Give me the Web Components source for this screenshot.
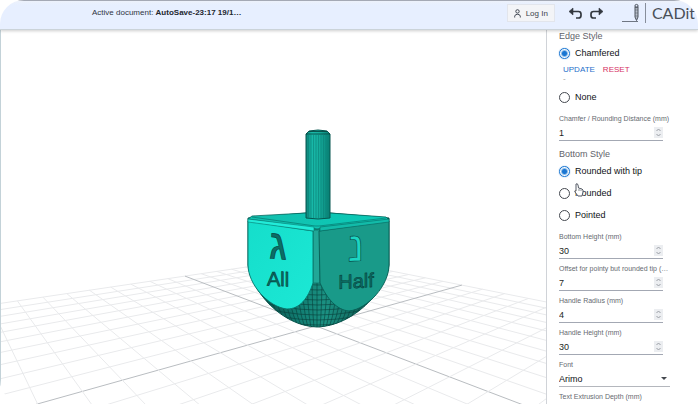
<!DOCTYPE html>
<html lang="en">
<head>
<meta charset="utf-8">
<title>CADit</title>
<style>
  body { margin: 0; background: #fff; font-family: "Liberation Sans", Arial, sans-serif; color: #24272c; }
</style>
</head>
<body>
<cad-app></cad-app>
<script>
const define = (name, html, setup) => {
  const tpl = document.createElement('template');
  tpl.innerHTML = html;
  customElements.define(name, class extends HTMLElement {
    constructor() {
      super();
      this.attachShadow({ mode: 'open' }).append(tpl.content.cloneNode(true));
    }
    connectedCallback() { if (setup) setup(this, this.shadowRoot); }
  });
};

define('cad-header', `
<style>
  :host { display: flex; align-items: center; box-sizing: border-box; height: 30px; padding: 0 3px 4px 92px;
    background: linear-gradient(#edf1fb, #e7efff 4px); border-top: 1px solid #a4a9b5; border-bottom: 1px solid #cbd3d9;
    box-shadow: 0 1px 3px #0003; position: relative; z-index: 1; }
  .doc { font-size: 8px; line-height: 12px; color: #2f343f; white-space: nowrap; flex: 1; }
  b { color: #23272f; }
  button { font: inherit; color: #3d434d; border: 0; background: none; padding: 0; display: flex; align-items: center; }
  .login { height: 18px; box-sizing: border-box; padding: 0 6px; gap: 5px; font-size: 8px; background: #f3f4f7; border: 1px solid #e2e5ec; margin-right: 13px; }
  .tool { margin-right: 6px; }
  .logo { display: flex; align-items: center; margin-left: 12px; gap: 6px; color: #4a4f58; text-decoration: none; font: 16px/20px Lato, sans-serif; }
</style>
<div class="doc">Active document: <b>AutoSave-23:17 19/1…</b></div>
<button class="login"><svg width="7" height="9" viewBox="0 0 7 9" fill="none" stroke="#414753"><circle cx="3.5" cy="2.4" r="1.7"/><path d="M.7 8.5V7.2Q1 5.3 3.5 5.3T6.3 7.2V8.5"/></svg>Log In</button>
<button class="tool" aria-label="Undo"><svg width="15" height="13" viewBox="0 0 15 13" fill="none" stroke="#33383f" stroke-width="1.7"><path d="M3 4.5H10.500Q13 4.500 13 7V8.500Q13 11 10.500 11H8"/><path d="M5 1 1 4.500 5 8Z" fill="#33383f" stroke-width=".6"/></svg></button>
<button class="tool" aria-label="Redo"><svg width="15" height="13" viewBox="0 0 15 13" fill="none" stroke="#33383f" stroke-width="1.7"><path d="M12 4.500H4.500Q2 4.500 2 7V8.500Q2 11 4.500 11H7"/><path d="M10 1 14 4.500 10 8Z" fill="#33383f" stroke-width=".6"/></svg></button>
<a class="logo" href="#"><svg width="24" height="20" viewBox="0 0 24 20" fill="none" stroke="#6f7683"><path d="M0 18.5H16"/><path d="M23.5 0V20" stroke="#878e9b"/><path d="M13 4V14L14.5 17.5 16 14V4Z" stroke="#4e545e" fill="#b9bfca"/><circle cx="14.5" cy="3" r="1.6" stroke="#4e545e"/><path d="M13 7H16M13 10H16M13 13H16" stroke="#4e545e" stroke-width=".5"/></svg>CADit</a>
`);

define('cad-scene', `
<style>
  :host { display: block; min-width: 0; min-height: 0; overflow: hidden; background: #fff; border-left: 1px solid #c3d2d8; }
  svg { display: block; width: 100%; height: 100%; }
</style>
<svg viewBox="1 30 545 374" preserveAspectRatio="xMidYMid slice" role="img" aria-label="Dreidel model">
  <defs>
    <linearGradient id="stem"><stop offset="0" stop-color="#0c8176"/><stop offset=".25" stop-color="#18b9a9"/><stop offset=".55" stop-color="#16ad9d"/><stop offset="1" stop-color="#087f73"/></linearGradient>
    <linearGradient id="top"><stop offset="0" stop-color="#13bfae"/><stop offset="1" stop-color="#0bcab7"/></linearGradient>
    <linearGradient id="left" x2="1" y2="1"><stop offset="0" stop-color="#15decb"/><stop offset="1" stop-color="#1ce8d5"/></linearGradient>
    <linearGradient id="bowl"><stop offset="0" stop-color="#0b3d3a"/><stop offset=".35" stop-color="#117c71"/><stop offset=".55" stop-color="#1b9182"/><stop offset="1" stop-color="#08413b"/></linearGradient>
    <clipPath id="bowlclip"><path d="M248 262C251 290 280 326 317 327 354 326 386 292 389 262L320 250H313Z"/></clipPath>
  </defs>
  <g id="grid" fill="none" stroke="#e9eaec"></g>
  <path d="M248 218V265C251 290 281 326 317 327 354 326 386 290 389 265V218L330 213H306Z" fill="url(#bowl)" stroke="#07564e"/>
  <g id="mesh" clip-path="url(#bowlclip)" fill="none" stroke="#083f3a" stroke-width=".6"></g>
  <path d="M313 230H320V283H313Z" fill="#21a797" stroke="#0b6e64" stroke-width=".7"/>
  <path d="M248 221 313 231V283C308 298 300 309 287 309 268 307 248 284 248 265Z" fill="url(#left)" stroke="#07766c" stroke-width=".9"/>
  <path d="M389 221 319 231 320 283C327 299 337 310 349 311 368 309 389 285 389 265Z" fill="#199a89" stroke="#075e55" stroke-width=".9"/>
  <path d="M248 219 252 216 306 213H330L386 217 389 220 317 229Z" fill="url(#top)" stroke="#08685f" stroke-width=".8"/>
  <path d="M248 219 314 227V231L248 222Z" fill="#22ecd9" stroke="#087d73" stroke-width=".6"/>
  <path d="M389 219 320 227V231L389 222Z" fill="#12bba9" stroke="#07685f" stroke-width=".6"/>
  <path d="M252 217 315 226H319L386 218" fill="none" stroke="#06796e" stroke-width=".7"/>
  <path d="M306 218V134L309 131Q318 129 327 131L330 134V218Q318 220 306 218Z" fill="url(#stem)" stroke="#075750"/>
  <path d="M306 134H330M309 131.500H327" stroke="#053f3a" stroke-width=".8"/>
  <path d="M308.500 134V218M311 134V218M313.500 134V218M316 134V218M318.500 134V218M321 134V218M323.500 134V218M326 134V218M328 134V218" stroke="#0b8277" stroke-width=".6"/>
  <g font-family="'Liberation Sans', sans-serif" text-anchor="middle" stroke-width=".6">
    <g transform="translate(278 0) skewY(3)" fill="#0b6e66" stroke="#06413c"><text y="259" font-size="42">ג</text><text y="286" font-size="20">All</text></g>
    <g transform="translate(356 0) skewY(-3)" stroke="#06413c"><text y="261" font-size="42" fill="#1cd5c2">נ</text><text y="288" font-size="20" fill="#0c6f65">Half</text></g>
  </g>
</svg>
`, (host, root) => {
  /* Ground plane: u and v run from -10 to 10, each with its own vanishing point. */
  const project = (u, v) => {
    const p = -.0514 * u, q = -.0385 * v, w = 1 + p + q;
    return ((316 - 70 * p + 841 * q) / w).toFixed(1) + ' ' + ((326 + 179 * p + 179 * q) / w).toFixed(1);
  };
  let grid = '';
  for (let i = -10; i <= 10; i++) {
    const axis = i === 0 ? ' stroke="#b9bdc1"' : '';
    grid += `<path d="M${project(-10, i)}L${project(10, i)}"${axis}/><path d="M${project(i, -10)}L${project(i, 10)}"${axis}/>`;
  }
  root.getElementById('grid').innerHTML = grid;
  let mesh = '';
  for (let i = -12; i <= 12; i++) mesh += `<path d="M${317 + i * 5} 270Q${317 + i * 5} 306 ${317 + i * 3} 328"/>`;
  for (let y = 285; y < 328; y += 5) mesh += `<path d="M248 ${y - 12}Q317 ${y + 12} 389 ${y - 12}"/>`;
  root.getElementById('mesh').innerHTML = mesh;
});

define('cad-radio', `
<style>
  :host { display: block; }
  label { display: flex; align-items: center; gap: 5px; height: 22px; font-size: 9px; color: #101216; }
  input { appearance: none; box-sizing: border-box; width: 11px; height: 11px; margin: 0; border: 1px solid #44484f; border-radius: 50%; outline: 0; }
  input:checked { border-color: #1976d2; background: radial-gradient(circle, #1976d2 2px, #fff 4px); box-shadow: 0 0 1px #1976d2; }
</style>
<label><input type="radio"><span><slot></slot></span></label>
`, (host, root) => { root.querySelector('input').checked = host.hasAttribute('checked'); });

define('cad-number', `
<style>
  :host { display: block; width: 104px; height: 28px; }
  label { display: block; font-size: 7px; line-height: 12px; color: #666a71; white-space: nowrap; }
  .row { display: flex; align-items: center; height: 15px; border-bottom: 1px solid #a3a8b3; }
  input { flex: 1; min-width: 0; border: 0; padding: 0; outline: 0; background: none; font: 9px/14px "Liberation Sans", Arial, sans-serif; color: #1c1f24; }
  svg { background: #eceef1; }
</style>
<label for="value"></label>
<div class="row"><input id="value"><svg width="9" height="11" viewBox="0 0 9 11" fill="none" stroke="#9a9ea5"><path d="M2.500 4 4.500 2 6.500 4M2.500 7 4.500 9 6.500 7"/></svg></div>
`, (host, root) => {
  root.querySelector('label').textContent = host.getAttribute('label');
  root.querySelector('input').value = host.getAttribute('value');
});

define('cad-font', `
<style>
  :host { display: block; height: 28px; }
  label { display: block; font-size: 7px; line-height: 12px; color: #666a71; }
  .row { display: flex; align-items: center; height: 15px; border-bottom: 1px solid #b4b7bd; padding-right: 3px; }
  select { flex: 1; min-width: 0; appearance: none; border: 0; padding: 0; background: none; font: 9px/14px "Liberation Sans", Arial, sans-serif; color: #101216; }
</style>
<label for="font">Font</label>
<div class="row"><select id="font"><option>Arimo</option></select><svg width="6" height="3" viewBox="0 0 6 3"><path d="M0 0H6L3 3Z" fill="#44484f"/></svg></div>
`);

define('cad-panel', `
<style>
  :host { display: block; min-height: 0; overflow: hidden; box-sizing: border-box; padding: 0 28px 0 12px; border-left: 1px solid #d0d3d8; background: #fff; }
  h2 { margin: 0; font-size: 9px; line-height: 12px; font-weight: 400; color: #5f636a; }
  .actions { display: flex; gap: 8px; padding-left: 4px; height: 12px; }
  button { border: 0; padding: 0; background: none; font: 8px/12px "Liberation Sans", Arial, sans-serif; color: #1f70ca; }
  .reset { color: #d62f62; }
  .dash { height: 10px; padding-left: 4px; font-size: 8px; line-height: 6px; color: #999; }
  .fields { display: grid; gap: 4px; padding: 5px 0 7px; }
  .target { position: relative; }
  .hand { position: absolute; left: 15px; top: 1px; }
</style>
<h2>Edge Style</h2>
<cad-radio checked>Chamfered</cad-radio>
<div class="actions"><button>UPDATE</button><button class="reset">RESET</button></div>
<div class="dash">-</div>
<cad-radio>None</cad-radio>
<div class="fields"><cad-number label="Chamfer / Rounding Distance (mm)" value="1"></cad-number></div>
<h2>Bottom Style</h2>
<cad-radio checked>Rounded with tip</cad-radio>
<div class="target"><cad-radio>Rounded</cad-radio>
<svg class="hand" width="10" height="14" viewBox="0 0 10 14"><path d="M2 1Q3.500 0 4 2L4.500 5 8 6Q9.500 6.500 9 9L8 13H4L1 9Q0 7.500 2 8Z" fill="#fff" stroke="#555b66"/><path d="M5 6V8M7 6.500V8" stroke="#555b66" stroke-width=".7"/></svg></div>
<cad-radio>Pointed</cad-radio>
<div class="fields">
  <cad-number label="Bottom Height (mm)" value="30"></cad-number>
  <cad-number label="Offset for pointy but rounded tip (…" value="7"></cad-number>
  <cad-number label="Handle Radius (mm)" value="4"></cad-number>
  <cad-number label="Handle Height (mm)" value="30"></cad-number>
  <cad-font></cad-font>
  <cad-number label="Text Extrusion Depth (mm)" value="1"></cad-number>
</div>
`);

define('cad-app', `
<style>
  :host { display: grid; grid-template: 30px minmax(0, 1fr) / minmax(0, 1fr) 152px; height: 100vh; overflow: hidden; border-radius: 24px; }
  cad-header { grid-column: 1 / -1; }
</style>
<cad-header></cad-header>
<cad-scene></cad-scene>
<cad-panel></cad-panel>
`);
</script>
</body>
</html>
